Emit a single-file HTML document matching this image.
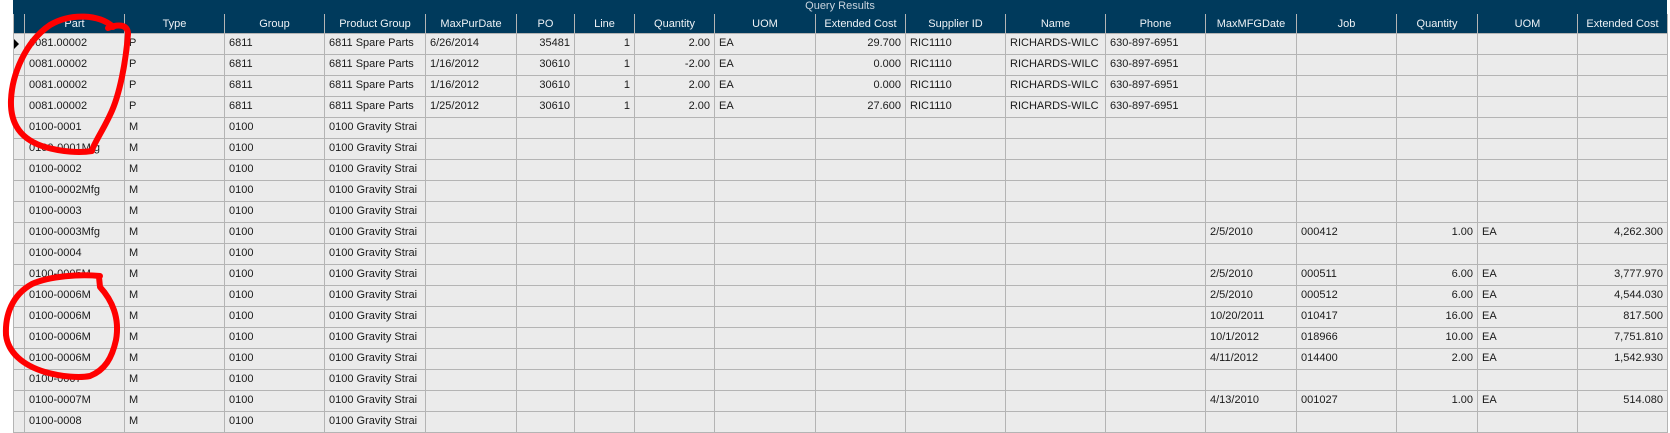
<!DOCTYPE html>
<html><head><meta charset="utf-8">
<style>
html,body{margin:0;padding:0;background:#fff;width:1670px;height:433px;overflow:hidden;}
body{font-family:"Liberation Sans",Arial,sans-serif;font-size:11px;position:relative;}
.title{position:absolute;left:13px;top:0;width:1654px;height:14px;background:#003a5c;color:#c9d4de;text-align:center;line-height:13px;font-size:11px;}
table{position:absolute;left:13px;top:14px;border-collapse:collapse;table-layout:fixed;width:1654px;}
th{background:#003a5c;color:#eef2f6;font-weight:normal;height:19px;border:1px solid #b4b4b4;border-top:none;padding:0;line-height:18px;white-space:nowrap;overflow:hidden;}
td{background:#ebebeb;color:#1a1a1a;height:20px;border:1px solid #b4b4b4;padding:0 3px 0 4px;vertical-align:top;line-height:18px;white-space:nowrap;overflow:hidden;}
td.r{text-align:right;padding-right:4px;}
td.h{padding:0;background:#ebebeb;}
</style></head><body>
<div class="title">Query Results</div>
<table>
<colgroup>
<col style="width:11px"><col style="width:100px"><col style="width:100px"><col style="width:100px"><col style="width:101px"><col style="width:91px"><col style="width:58px"><col style="width:60px"><col style="width:80px"><col style="width:101px"><col style="width:90px"><col style="width:100px"><col style="width:100px"><col style="width:100px"><col style="width:91px"><col style="width:100px"><col style="width:81px"><col style="width:100px"><col style="width:90px">
</colgroup>
<tr><th></th><th>Part</th><th>Type</th><th>Group</th><th>Product Group</th><th>MaxPurDate</th><th>PO</th><th>Line</th><th>Quantity</th><th>UOM</th><th>Extended Cost</th><th>Supplier ID</th><th>Name</th><th>Phone</th><th>MaxMFGDate</th><th>Job</th><th>Quantity</th><th>UOM</th><th>Extended Cost</th></tr>
<tr><td class="h" style="position:relative"><div style="position:absolute;left:0;top:5px;width:0;height:0;border-top:5px solid transparent;border-bottom:5px solid transparent;border-left:5px solid #000"></div></td><td>0081.00002</td><td>P</td><td>6811</td><td>6811 Spare Parts</td><td>6/26/2014</td><td class="r">35481</td><td class="r">1</td><td class="r">2.00</td><td>EA</td><td class="r">29.700</td><td>RIC1110</td><td>RICHARDS-WILC</td><td>630-897-6951</td><td></td><td></td><td></td><td></td><td></td></tr>
<tr><td class="h"></td><td>0081.00002</td><td>P</td><td>6811</td><td>6811 Spare Parts</td><td>1/16/2012</td><td class="r">30610</td><td class="r">1</td><td class="r">-2.00</td><td>EA</td><td class="r">0.000</td><td>RIC1110</td><td>RICHARDS-WILC</td><td>630-897-6951</td><td></td><td></td><td></td><td></td><td></td></tr>
<tr><td class="h"></td><td>0081.00002</td><td>P</td><td>6811</td><td>6811 Spare Parts</td><td>1/16/2012</td><td class="r">30610</td><td class="r">1</td><td class="r">2.00</td><td>EA</td><td class="r">0.000</td><td>RIC1110</td><td>RICHARDS-WILC</td><td>630-897-6951</td><td></td><td></td><td></td><td></td><td></td></tr>
<tr><td class="h"></td><td>0081.00002</td><td>P</td><td>6811</td><td>6811 Spare Parts</td><td>1/25/2012</td><td class="r">30610</td><td class="r">1</td><td class="r">2.00</td><td>EA</td><td class="r">27.600</td><td>RIC1110</td><td>RICHARDS-WILC</td><td>630-897-6951</td><td></td><td></td><td></td><td></td><td></td></tr>
<tr><td class="h"></td><td>0100-0001</td><td>M</td><td>0100</td><td>0100 Gravity Strai</td><td></td><td></td><td></td><td></td><td></td><td></td><td></td><td></td><td></td><td></td><td></td><td></td><td></td><td></td></tr>
<tr><td class="h"></td><td>0100-0001Mfg</td><td>M</td><td>0100</td><td>0100 Gravity Strai</td><td></td><td></td><td></td><td></td><td></td><td></td><td></td><td></td><td></td><td></td><td></td><td></td><td></td><td></td></tr>
<tr><td class="h"></td><td>0100-0002</td><td>M</td><td>0100</td><td>0100 Gravity Strai</td><td></td><td></td><td></td><td></td><td></td><td></td><td></td><td></td><td></td><td></td><td></td><td></td><td></td><td></td></tr>
<tr><td class="h"></td><td>0100-0002Mfg</td><td>M</td><td>0100</td><td>0100 Gravity Strai</td><td></td><td></td><td></td><td></td><td></td><td></td><td></td><td></td><td></td><td></td><td></td><td></td><td></td><td></td></tr>
<tr><td class="h"></td><td>0100-0003</td><td>M</td><td>0100</td><td>0100 Gravity Strai</td><td></td><td></td><td></td><td></td><td></td><td></td><td></td><td></td><td></td><td></td><td></td><td></td><td></td><td></td></tr>
<tr><td class="h"></td><td>0100-0003Mfg</td><td>M</td><td>0100</td><td>0100 Gravity Strai</td><td></td><td></td><td></td><td></td><td></td><td></td><td></td><td></td><td></td><td>2/5/2010</td><td>000412</td><td class="r">1.00</td><td>EA</td><td class="r">4,262.300</td></tr>
<tr><td class="h"></td><td>0100-0004</td><td>M</td><td>0100</td><td>0100 Gravity Strai</td><td></td><td></td><td></td><td></td><td></td><td></td><td></td><td></td><td></td><td></td><td></td><td></td><td></td><td></td></tr>
<tr><td class="h"></td><td>0100-0005M</td><td>M</td><td>0100</td><td>0100 Gravity Strai</td><td></td><td></td><td></td><td></td><td></td><td></td><td></td><td></td><td></td><td>2/5/2010</td><td>000511</td><td class="r">6.00</td><td>EA</td><td class="r">3,777.970</td></tr>
<tr><td class="h"></td><td>0100-0006M</td><td>M</td><td>0100</td><td>0100 Gravity Strai</td><td></td><td></td><td></td><td></td><td></td><td></td><td></td><td></td><td></td><td>2/5/2010</td><td>000512</td><td class="r">6.00</td><td>EA</td><td class="r">4,544.030</td></tr>
<tr><td class="h"></td><td>0100-0006M</td><td>M</td><td>0100</td><td>0100 Gravity Strai</td><td></td><td></td><td></td><td></td><td></td><td></td><td></td><td></td><td></td><td>10/20/2011</td><td>010417</td><td class="r">16.00</td><td>EA</td><td class="r">817.500</td></tr>
<tr><td class="h"></td><td>0100-0006M</td><td>M</td><td>0100</td><td>0100 Gravity Strai</td><td></td><td></td><td></td><td></td><td></td><td></td><td></td><td></td><td></td><td>10/1/2012</td><td>018966</td><td class="r">10.00</td><td>EA</td><td class="r">7,751.810</td></tr>
<tr><td class="h"></td><td>0100-0006M</td><td>M</td><td>0100</td><td>0100 Gravity Strai</td><td></td><td></td><td></td><td></td><td></td><td></td><td></td><td></td><td></td><td>4/11/2012</td><td>014400</td><td class="r">2.00</td><td>EA</td><td class="r">1,542.930</td></tr>
<tr><td class="h"></td><td>0100-0007</td><td>M</td><td>0100</td><td>0100 Gravity Strai</td><td></td><td></td><td></td><td></td><td></td><td></td><td></td><td></td><td></td><td></td><td></td><td></td><td></td><td></td></tr>
<tr><td class="h"></td><td>0100-0007M</td><td>M</td><td>0100</td><td>0100 Gravity Strai</td><td></td><td></td><td></td><td></td><td></td><td></td><td></td><td></td><td></td><td>4/13/2010</td><td>001027</td><td class="r">1.00</td><td>EA</td><td class="r">514.080</td></tr>
<tr><td class="h"></td><td>0100-0008</td><td>M</td><td>0100</td><td>0100 Gravity Strai</td><td></td><td></td><td></td><td></td><td></td><td></td><td></td><td></td><td></td><td></td><td></td><td></td><td></td><td></td></tr>
</table>
<svg width="1670" height="433" style="position:absolute;left:0;top:0" fill="none" stroke="#ff0000" stroke-width="6" stroke-linecap="round" stroke-linejoin="round">
<path d="M113,27 C100,14 70,13 50,25 C25,42 12,75 11,100 C10,125 22,140 45,147 C62,152 80,153 92,151"/>
<path d="M108,28 C118,24 128,24 128,34 C126,60 120,95 110,115 C103,130 96,140 92,150"/>
<path d="M100,276 C80,274 50,276 32,284 C12,295 5,315 6,335 C8,352 22,365 45,372 C62,377 80,378 90,376 C105,370 112,358 116,340 C120,318 112,300 100,287 L99,277"/>
</svg>
</body></html>
